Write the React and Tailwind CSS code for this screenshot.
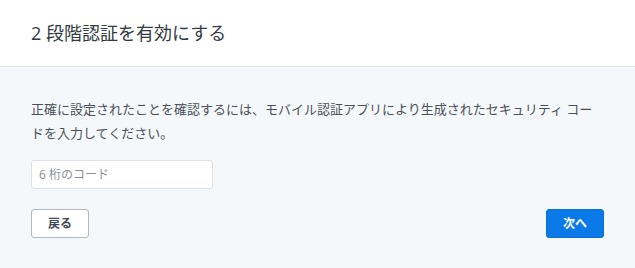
import React, { useState } from "react";

const FONT = {
  fontFamily: '"Open Sans", "Noto Sans CJK JP", sans-serif',
};

export default function App() {
  const [code, setCode] = useState("");

  return (
    <div className="w-[635px] h-[268px] bg-white flex flex-col" style={FONT}>
      {/* Header */}
      <div className="h-[67px] shrink-0 flex items-center px-[31px] border-b border-[#e1e5ea]">
        <h1 className="text-[18px] text-[#333a42] font-normal">
          2 段階認証を有効にする
        </h1>
      </div>

      {/* Body */}
      <div className="flex-1 bg-[#f5f8fb] px-[31px] pt-[30px]">
        <p className="text-[13px] leading-[24px] text-[#4a5058]">
          正確に設定されたことを確認するには、モバイル認証アプリにより生成されたセキュリティ コードを入力してください。
        </p>

        <input
          type="text"
          value={code}
          onChange={(e) => setCode(e.target.value)}
          placeholder="6 桁のコード"
          className="mt-[15px] block w-[182px] h-[29px] px-[7px] text-[12px] bg-white border border-[#dde1e6] rounded-[3px] text-[#333] placeholder:text-[#8a8f96] focus:outline-none"
        />

        <div className="mt-[20px] flex justify-between">
          <button className="w-[58px] h-[29px] rounded-[3px] border border-[#b4b8bd] bg-white text-[12px] font-semibold text-[#3f4750]">
            戻る
          </button>
          <button className="w-[58px] h-[29px] rounded-[3px] border border-[#0b6fd6] bg-[#0a7ae8] text-[12px] font-semibold text-white">
            次へ
          </button>
        </div>
      </div>
    </div>
  );
}
